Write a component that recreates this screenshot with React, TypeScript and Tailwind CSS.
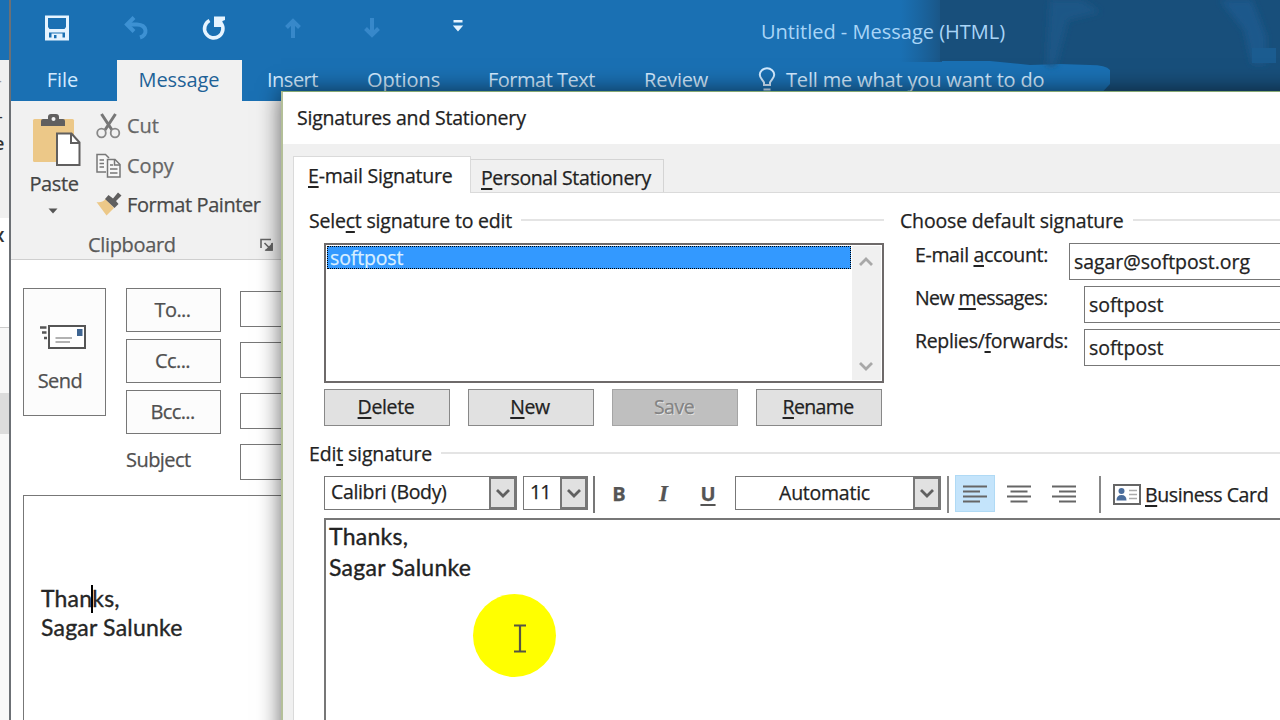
import type { ReactNode } from "react";

interface TextProps {
  children: ReactNode;
  className?: string;
}

const Label = ({ children, className = "" }: TextProps) => (
  <span className={`whitespace-nowrap ${className}`}>{children}</span>
);

/** Underlined access key inside a dialog label. */
const Key = ({ children }: { children: ReactNode }) => (
  <span className="underline decoration-[1.5px] underline-offset-[3px]">{children}</span>
);

const QuickAccess = () => (
  <div className="flex h-14 shrink-0 items-center">
    <div className="flex w-[79px] justify-center">
      <svg width="26" height="26" viewBox="0 0 26 26" fill="#e6f4ff">
        <path fillRule="evenodd" d="M1 0.5h24v25H1zM4 3v9l1.500 2h15L22 12V3zM5 17.500V22.500h2.500V18.500h11v4h2.500v-5zM10 20v3.200h2.500V20z" />
      </svg>
    </div>
    <div className="flex w-[79px] justify-center">
      <svg width="26" height="24" viewBox="0 0 26 24" fill="none" stroke="#3d91d3" strokeWidth="4">
        <path d="M11 1.500L4 8.500L11 15.500" />
        <path d="M4 8.500H14C24.500 9 25 19 17 21.500" />
      </svg>
    </div>
    <div className="flex w-[77px] justify-center">
      <svg width="26" height="26" viewBox="0 0 26 26" fill="none" stroke="#e6f4ff" strokeWidth="3.600">
        <path d="M8.500 5.500A9.200 9.200 0 1 0 20 8" />
        <path d="M13 1.500H24V5L21.500 6L20.500 12H13Z" fill="#e6f4ff" stroke="none" />
      </svg>
    </div>
    <div className="flex w-[81px] justify-center">
      <svg width="18" height="22" viewBox="0 0 18 22" fill="none" stroke="#3788ca" strokeWidth="4">
        <path d="M9 21V4M2.500 10.500L9 4L15.500 10.500" />
      </svg>
    </div>
    <div className="flex w-[77px] justify-center">
      <svg width="18" height="22" viewBox="0 0 18 22" fill="none" stroke="#3788ca" strokeWidth="4">
        <path d="M9 1V18M2.500 11.500L9 18L15.500 11.500" />
      </svg>
    </div>
    <div className="flex w-[95px] justify-center pb-1">
      <svg width="12" height="14" viewBox="0 0 12 14" fill="#e6f4ff">
        <path d="M1.500 1h9v2.500h-9zM0.800 6.500h10.400L6 12.500z" />
      </svg>
    </div>
  </div>
);

/** Dark brush pattern behind the right part of the title bar. */
const TitlePattern = () => (
  <svg className="absolute right-0 top-0" width="380" height="100" viewBox="0 0 380 100">
    <defs>
      <linearGradient id="edge" x1="0" x2="1">
        <stop offset="0" stopColor="#1a5b90" stopOpacity="0" />
        <stop offset="1" stopColor="#1a5585" />
      </linearGradient>
      <filter id="soft" x="-20%" y="-20%" width="140%" height="140%">
        <feGaussianBlur stdDeviation="3" />
      </filter>
    </defs>
    <rect x="0" y="0" width="42" height="62" fill="url(#edge)" />
    <path d="M40 0H380V100H195L210 84V70Q206 65 190 65L160 64L130 65L90 61H40Z" fill="#184f7b" />
    <path d="M150 0H182L200 12L168 20L156 66H146Z" fill="#1a5686" filter="url(#soft)" />
    <path d="M320 0H352L366 36V64H352L344 30Z" fill="#1c598b" filter="url(#soft)" />
    <path d="M352 48H376V63H352Z" fill="#1b5c90" />
  </svg>
);

const OutlookHeader = () => (
  <div className="relative h-[101px] shrink-0 bg-[#1a70b3]">
    <TitlePattern />
    <div className="relative flex h-[60px] pl-[6px]">
      <QuickAccess />
      <Label className="ml-[256px] leading-[64px] text-[#a9d5f7]">Untitled - Message (HTML)</Label>
    </div>
    <div className="relative flex h-[41px] leading-10 text-[#d2eaff]">
      <Label className="w-[106px] pr-[3px] text-center">File</Label>
      <Label className="w-[125px] bg-[#f1f1f1] pr-px text-center tracking-[-0.1px] text-[#1e6297]">Message</Label>
      <Label className="ml-[25px] w-[51px] tracking-[-0.5px]">Insert</Label>
      <Label className="ml-[49px] w-[73px] tracking-[-0.1px]">Options</Label>
      <Label className="ml-[48px] w-[108px] tracking-[-0.5px]">Format Text</Label>
      <Label className="ml-[48px] w-[64px] tracking-[-0.2px]">Review</Label>
      <svg className="ml-[49px] mt-[7px]" width="20" height="26" viewBox="0 0 20 26" fill="none" stroke="#d2eaff" strokeWidth="2">
        <path d="M7 18V15.500C5.500 12.500 2.800 11 2.800 7.800A7.200 6.500 0 0 1 17.200 7.800C17.200 11 14.500 12.500 13 15.500V18ZM6.500 22.500H13.500" />
      </svg>
      <Label className="ml-[9px] tracking-[-0.17px]">Tell me what you want to do</Label>
    </div>
  </div>
);

const Ribbon = () => (
  <div className="h-[159px] shrink-0 border-b border-[#cfcfcf] bg-[#f1f1f1] text-[#5a5a5a] [-webkit-text-stroke:0.25px]">
    <div className="flex h-[131px]">
      <div className="flex w-[86px] flex-col items-center pt-3">
        <svg className="ml-[6px] shrink-0" width="50" height="54" viewBox="0 0 50 54">
          <rect x="1" y="6" width="41" height="43" rx="1.500" fill="#ecc888" />
          <path d="M9 13V8Q9 6 11 6H16V4Q16 1 19 1H24Q27 1 27 4V6H31Q33 6 33 8V13Z" fill="#605f5f" />
          <circle cx="21.500" cy="6" r="2" fill="#f1f1f1" />
          <path d="M25 20.500H39.500L47.500 29.500V52H25Z" fill="#fff" stroke="#605f5f" strokeWidth="2" />
          <path d="M39 20.500V30H47.500" fill="none" stroke="#605f5f" strokeWidth="2" />
        </svg>
        <Label className="mt-[5px] leading-[24px] tracking-[-0.4px] text-[#444]">Paste</Label>
        <svg className="mt-[12px] mr-[2px] shrink-0" width="10" height="6" viewBox="0 0 10 6">
          <path d="M0.500 0.500H9.500L5 5.500Z" fill="#555" />
        </svg>
      </div>
      <div className="-ml-px pt-[5px] text-[#666]">
        <div className="flex h-[39px] items-center gap-[6px]">
          <svg width="25" height="26" viewBox="0 0 25 26" fill="none" stroke="#777">
            <path d="M5.500 1L16 17M19.500 1L9 17" strokeWidth="3" />
            <circle cx="5.500" cy="20" r="4.300" strokeWidth="1.800" stroke="#888" />
            <circle cx="19" cy="20" r="4.300" strokeWidth="1.800" stroke="#888" />
          </svg>
          <Label>Cut</Label>
        </div>
        <div className="flex h-[41px] items-center gap-[6px]">
          <svg width="25" height="26" viewBox="0 0 25 26" fill="#f7f7f7" stroke="#777" strokeWidth="1.500">
            <path d="M10 19H1V1.500H9.500L13 5" />
            <path d="M3.500 7H8M3.500 10.500H8M3.500 14H8" />
            <path d="M11.500 6.500H19L24 11.500V24H11.500Z" />
            <path d="M18.500 6.500V12H24M14 12H17M14 16H21.500M14 20H21.500" fill="none" />
          </svg>
          <Label>Copy</Label>
        </div>
        <div className="flex h-[38px] items-center gap-[5px]">
          <svg className="mb-[3px]" width="26" height="26" viewBox="0 0 26 26">
            <path d="M0.500 11Q6 12 9.500 8L18 17L10.500 24.500Z" fill="#ecc888" />
            <path d="M9 8L12.500 4L17 7.500L22 1.500L25.500 4.500L20 10L22.500 13L18.500 17Z" fill="#605f5f" />
          </svg>
          <Label className="tracking-[-0.42px] text-[#484848]">Format Painter</Label>
        </div>
      </div>
    </div>
    <div className="flex h-[26px] items-center pl-[77px]">
      <Label className="w-[172px] tracking-[-0.33px]">Clipboard</Label>
      <svg width="14" height="14" viewBox="0 0 14 14" fill="none" stroke="#666" strokeWidth="1.600">
        <path d="M1 10V1.500H11M4.500 5L10 10.500M12 5V12H5.500" />
        <path d="M12 6.500V12H6.500Z" fill="#666" />
      </svg>
    </div>
  </div>
);

const recipients = ["To...", "Cc...", "Bcc..."];

const ComposeArea = () => (
  <div className="flex flex-1 flex-col bg-white pl-3 text-[#505050]">
    <div className="flex h-[235px] pt-[28px] [-webkit-text-stroke:0.25px]">
      <div className="flex h-[128px] w-[83px] flex-col items-center border border-[#777] bg-[#fcfcfc] pr-[3px] pt-[34px]">
        <svg className="shrink-0" width="48" height="28" viewBox="0 0 48 28">
          <path d="M1 4.500H7.500M3 9.500H7.500M5 15H8" stroke="#555" strokeWidth="2.400" />
          <rect x="10" y="3" width="36" height="22" fill="#fff" stroke="#555" strokeWidth="2" />
          <rect x="38" y="6" width="5.500" height="7" fill="#3f6592" />
          <path d="M16.500 15H33M16.500 19H31" stroke="#999" strokeWidth="1.400" />
        </svg>
        <Label className="mr-[6px] mt-[18px] leading-6 tracking-[-0.5px]">Send</Label>
      </div>
      <div className="ml-5 flex w-[95px] flex-col gap-[7px]">
        {recipients.map((name) => (
          <div key={name} className="flex h-11 items-center justify-center border border-[#777] bg-[#fcfcfc] pr-[2px] tracking-[-0.6px]">
            {name}
          </div>
        ))}
        <Label className="pt-px leading-9 tracking-[-0.55px]">Subject</Label>
      </div>
      <div className="ml-[19px] flex flex-1 flex-col gap-[15px] pt-[3px]">
        {[...recipients, "Subject"].map((name) => (
          <div key={name} className="h-9 shrink-0 border border-[#777] bg-white" />
        ))}
      </div>
    </div>
    <div className="flex-1 border-l border-t border-[#777] pl-[17px] pt-[88px] font-[Lato,sans-serif] text-[23px] leading-[29px] tracking-[0.2px] text-[#262626] [-webkit-text-stroke:0.35px]">
      <p>
        Than
        <span className="relative">
          <span className="absolute -left-[1px] top-[1px] h-7 w-[2px] bg-black" />
        </span>
        ks,
      </p>
      <p>Sagar Salunke</p>
    </div>
  </div>
);

/** Edge of the main Outlook window, visible behind the message. */
const BackgroundWindow = () => (
  <div className="flex w-[9px] shrink-0 flex-col overflow-hidden bg-[#f8f8f8] text-[#333]">
    <div className="h-[60px] bg-[#1a70b3]" />
    <div className="flex h-[158px] flex-col bg-[#f0f0f0] pt-[2px] text-[18px]">
      <span className="-ml-[4px] mt-[8px] leading-5 text-[#999]">-</span>
      <span className="-ml-[3px] mt-[16px] leading-5">-</span>
      <span className="-ml-[6px] mt-[7px] font-semibold leading-5">e</span>
    </div>
    <div className="h-[109px] bg-white pt-[3px] text-[19px]">
      <span className="-ml-[6px] font-semibold leading-5">x</span>
    </div>
    <div className="h-[66px] border-t border-[#ccc]" />
    <div className="h-[41px] bg-[#dcdcdc]" />
  </div>
);

const GroupHeading = ({ children, className = "" }: TextProps) => (
  <div className="flex h-6 items-center">
    <Label className={`pt-[2px] ${className}`}>{children}</Label>
    <span className="ml-[9px] h-[2px] flex-1 bg-[#e4e4e4]" />
  </div>
);

const Chevron = ({ up, color }: { up?: boolean; color: string }) => (
  <svg width="16" height="12" viewBox="0 0 16 12" fill="none" stroke={color} strokeWidth="2.800">
    <path d={up ? "M2 9L8 3L14 9" : "M2 3L8 9L14 3"} />
  </svg>
);

const Combo = ({ children, className = "" }: TextProps) => (
  <div className={`mt-px flex h-[34px] border border-[#777] bg-white ${className}`}>
    <span className="flex-1 whitespace-nowrap">{children}</span>
    <span className="flex w-[27px] items-center justify-center border-2 border-[#777] bg-[#e1e1e1]">
      <Chevron color="#606060" />
    </span>
  </div>
);

const DialogButton = ({ children, className = "" }: TextProps) => (
  <div className={`flex h-[37px] w-[126px] items-center justify-center border pb-px pr-[2px] ${className}`}>{children}</div>
);

const SignatureList = () => (
  <div className="ml-[15px] mt-[11px] flex h-[140px] w-[560px] border-2 border-[#6e6a6a] bg-white p-px">
    <div className="h-[23px] flex-1 overflow-hidden border border-dotted border-black bg-[#3399ff] pl-[2px] leading-[22px] tracking-[-0.15px] text-[#d9efff]">
      softpost
    </div>
    <div className="ml-[1px] flex w-[29px] flex-col items-center justify-between bg-[#f0f0f0] pb-[8px] pr-[2px] pt-[10px]">
      <Chevron up color="#a8a8a8" />
      <Chevron color="#a8a8a8" />
    </div>
  </div>
);

const DefaultSignature = () => (
  <div className="flex w-[420px] flex-col">
    <GroupHeading className="tracking-[-0.17px]">Choose default signature</GroupHeading>
    <div className="mt-[11px] flex flex-col gap-[6px] pl-[15px]">
      <div className="flex h-[37px]">
        <Label className="w-[154px] leading-[24px] tracking-[-0.35px]">
          E-mail <Key>a</Key>ccount:
        </Label>
        <div className="flex-1 border border-[#777] pl-[4px] leading-[35px] tracking-[-0.05px]">sagar@softpost.org</div>
      </div>
      <div className="flex h-[37px]">
        <Label className="w-[169px] leading-[24px] tracking-[-0.6px]">
          New <Key>m</Key>essages:
        </Label>
        <div className="flex-1 border border-[#777] pl-[4px] leading-[35px]">softpost</div>
      </div>
      <div className="flex h-[37px]">
        <Label className="w-[169px] leading-[24px] tracking-[-0.33px]">
          Replies/<Key>f</Key>orwards:
        </Label>
        <div className="flex-1 border border-[#777] pl-[4px] leading-[35px]">softpost</div>
      </div>
    </div>
  </div>
);

const AlignIcon = ({ d }: { d: string }) => (
  <svg width="26" height="20" viewBox="0 0 26 20" fill="none" stroke="#666" strokeWidth="2">
    <path d={d} />
  </svg>
);

const Toolbar = () => (
  <div className="ml-[15px] mt-[10px] flex h-[38px]">
    <Combo className="w-[193px] pl-[6px] leading-[30px] tracking-[-0.35px]">Calibri (Body)</Combo>
    <Combo className="ml-[6px] w-[65px] pl-[6px] leading-[30px] tracking-[-0.8px]">11</Combo>
    <span className="ml-[5px] mt-px w-[2px] bg-[#777]" />
    <div className="flex w-[140px] pl-px text-center text-[20px] font-bold leading-[38px] text-[#555]">
      <span className="w-[46px]">B</span>
      <span className="w-[43px] font-['Liberation_Serif',serif] text-[23px] italic">I</span>
      <span className="w-[46px] underline decoration-2 underline-offset-[3px]">U</span>
    </div>
    <Combo className="w-[206px] text-center leading-[32px] tracking-[-0.25px]">Automatic</Combo>
    <span className="ml-[6px] mt-px w-[2px] bg-[#888]" />
    <div className="ml-[6px] flex h-[37px] w-[40px] items-center justify-center border border-[#b0daf5] bg-[#c4e4fb] pr-px">
      <AlignIcon d="M1 2.500H25M1 7.500H18M1 12.500H25M1 17.500H18" />
    </div>
    <div className="flex h-[37px] w-[45px] items-center justify-end pr-[8px]">
      <AlignIcon d="M1 2.500H25M4.500 7.500H21.500M1 12.500H25M4.500 17.500H21.500" />
    </div>
    <div className="flex h-[37px] w-[45px] items-center justify-end pr-[8px]">
      <AlignIcon d="M1 2.500H25M8 7.500H25M1 12.500H25M8 17.500H25" />
    </div>
    <span className="ml-[14px] mt-px w-[2px] bg-[#888]" />
    <svg className="ml-[12px] mt-[9px]" width="28" height="21" viewBox="0 0 28 21">
      <rect x="1" y="1" width="26" height="19" fill="#fff" stroke="#666" strokeWidth="2" />
      <circle cx="8.500" cy="7" r="3" fill="#4a6d9c" />
      <path d="M3.500 16.500Q3.500 11 8.500 11Q13.500 11 13.500 16.500Z" fill="#4a6d9c" />
      <path d="M16 6.500H24M16 10.500H24M16 14.500H24" stroke="#aaa" strokeWidth="1.300" />
    </svg>
    <Label className="ml-[4px] leading-[39px] tracking-[-0.4px]">
      <Key>B</Key>usiness Card
    </Label>
  </div>
);

const SignatureDialog = () => (
  <div className="absolute left-[281px] top-[91px] flex h-[660px] w-[1040px] flex-col border-l-2 border-t border-l-[#b3bf98] border-t-[#86a873] bg-[#f0f0f0] text-[19.5px] text-[#222] shadow-[0_0_22px_rgba(0,0,0,0.6)] [-webkit-text-stroke:0.25px]">
    <div className="h-[52px] shrink-0 bg-white pl-[14px] leading-[51px] tracking-[-0.2px]">Signatures and Stationery</div>
    <div className="flex flex-1 flex-col pl-[10px] pt-3">
      <div className="flex h-[37px] shrink-0">
        <Label className="w-[178px] border-x border-t border-[#dadada] bg-white pl-[14px] leading-[38px] tracking-[-0.2px]">
          <Key>E</Key>-mail Signature
        </Label>
        <div className="flex flex-1 items-end border-b border-[#dadada]">
          <Label className="h-[33px] w-[193px] border-r border-t border-[#d4d4d4] pl-[10px] leading-[35px] tracking-[-0.38px]">
            <Key>P</Key>ersonal Stationery
          </Label>
        </div>
      </div>
      <div className="flex flex-1 flex-col border-l border-[#dadada] bg-white pl-[15px] pt-[15px]">
        <div className="flex gap-4">
          <div className="w-[575px]">
            <GroupHeading className="tracking-[-0.2px]">
              Sele<Key>c</Key>t signature to edit
            </GroupHeading>
            <SignatureList />
            <div className="ml-[15px] mt-[6px] flex gap-[18px]">
              <DialogButton className="border-[#888] bg-[#e1e1e1] tracking-[-0.35px]">
                <Key>D</Key>elete
              </DialogButton>
              <DialogButton className="border-[#888] bg-[#e1e1e1] tracking-[-0.4px]">
                <Key>N</Key>ew
              </DialogButton>
              <DialogButton className="border-[#a5a5a5] bg-[#bfbfbf] tracking-[-0.5px] text-[#838383] [text-shadow:1px_1px_0_#e8e8e8]">
                Save
              </DialogButton>
              <DialogButton className="border-[#888] bg-[#e1e1e1] tracking-[-0.65px]">
                <Key>R</Key>ename
              </DialogButton>
            </div>
          </div>
          <DefaultSignature />
        </div>
        <div className="mt-[15px]">
          <GroupHeading className="tracking-[-0.15px]">
            Edi<Key>t</Key> signature
          </GroupHeading>
        </div>
        <Toolbar />
        <div className="ml-[15px] mt-[5px] flex-1 border-l-2 border-t-2 border-[#777] pl-[3px] pt-px font-[Lato,sans-serif] text-[23px] leading-[30.500px] tracking-[0.25px] [-webkit-text-stroke:0.35px]">
          <p>Thanks,</p>
          <p>Sagar Salunke</p>
        </div>
      </div>
    </div>
  </div>
);

/** Highlighted mouse pointer drawn by the screen recorder. */
const Pointer = () => (
  <div className="absolute left-[473px] top-[594px] size-[83px] rounded-full bg-[#ffff00]">
    <svg className="ml-[40px] mt-[30px]" width="14" height="29" viewBox="0 0 14 29" fill="none" stroke="#555544" strokeWidth="2.200">
      <path d="M1 1.500H13M7 1.500V27.500M1 27.500H13" />
    </svg>
  </div>
);

export default function App() {
  return (
    <div className="relative flex h-[720px] w-[1280px] overflow-hidden font-['Open_Sans','Noto_Sans',sans-serif] text-[20px]">
      <BackgroundWindow />
      <div className="flex flex-1 flex-col border-l-2 border-[#6c7075]">
        <OutlookHeader />
        <Ribbon />
        <ComposeArea />
      </div>
      <SignatureDialog />
      <Pointer />
    </div>
  );
}
